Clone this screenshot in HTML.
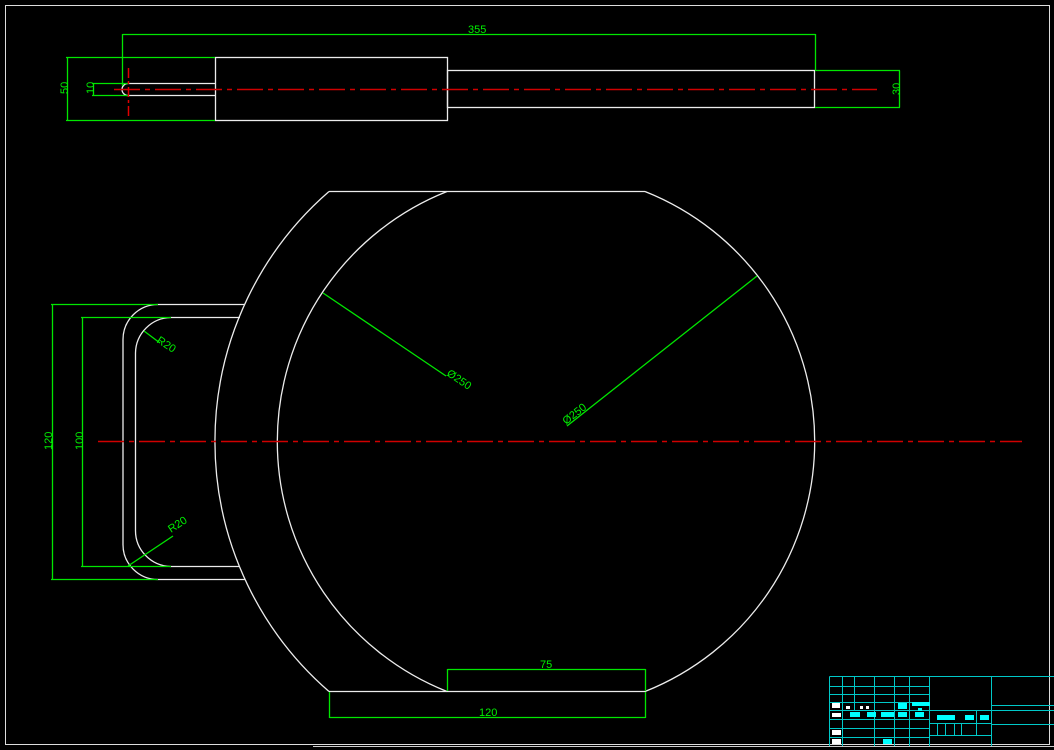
<!DOCTYPE html>
<html><head><meta charset="utf-8"><style>
html,body{margin:0;padding:0;background:#000;width:1054px;height:750px;overflow:hidden}
svg{display:block}
text{font-family:"Liberation Sans",sans-serif;font-size:11px;fill:#00f000}
</style></head><body>
<svg width="1054" height="750" viewBox="0 0 1054 750" xmlns="http://www.w3.org/2000/svg">
<rect x="5.5" y="5.5" width="1044" height="739" fill="none" stroke="#ddd" stroke-width="1"/>
<g fill="none" stroke="#ececec" stroke-width="1.3">
 <rect x="215.5" y="57.5" width="232" height="63"/>
 <rect x="447.5" y="70.5" width="367" height="37"/>
 <path d="M215.5 83.5 H128 A6 6 0 0 0 128 95.5 H215.5"/>
 <path d="M329 191.5 H645 M329 691.5 H645"/>
 <path d="M329 191.5 A331 331 0 0 0 329 691.5"/>
 <path d="M447 191.5 A269 269 0 0 0 447 691.5"/>
 <path d="M645 191.5 A269 269 0 0 1 645 691.5"/>
 <path d="M245 304.5 H158 A35 35 0 0 0 123 339.5 V544 A35 35 0 0 0 158 579.5 H245"/>
 <path d="M240 317.5 H171 A36 36 0 0 0 135.5 353 V530 A36 36 0 0 0 171 566.5 H240"/>
</g>
<g fill="none" stroke="#00e600" stroke-width="1.3">
 <path d="M122.5 34.5 H815.5 M122.5 34 V86 M815.5 34 V70"/>
 <path d="M67.5 57.5 V120.5 M66 57.5 H215 M66 120.5 H215"/>
 <path d="M93.5 83.5 V95.5 M92 83.5 H128 M92 95.5 H128"/>
 <path d="M899.5 70.5 V107.5 M815 70.5 H900 M815 107.5 H900"/>
 <path d="M52.5 304.5 V579.5 M51 304.5 H158 M51 579.5 H158"/>
 <path d="M82.5 317.5 V566.5 M81 317.5 H171 M81 566.5 H171"/>
 <path d="M144 331 L160 343"/>
 <path d="M128 566 L173 536"/>
 <path d="M323 293 L446 376"/>
 <path d="M757 276 L567 426"/>
 <path d="M447.5 669.5 H645.5 M447.5 669 V691 M645.5 669 V691"/>
 <path d="M329.5 717.5 H645.5 M329.5 692 V718 M645.5 692 V718"/>
</g>
<g fill="none" stroke="#d00000" stroke-width="1.6" stroke-dasharray="26 5 5 5">
 <path d="M114 89.5 H877"/>
 <path d="M98 441.5 H1022"/>
</g>
<path d="M128.5 68 V116" stroke="#e00000" stroke-width="1.5" stroke-dasharray="10 3 3 3"/>
<text x="468" y="33">355</text>
<text transform="translate(68,94) rotate(-90)">50</text>
<text transform="translate(94,94) rotate(-90)">10</text>
<text transform="translate(900,95) rotate(-90)">30</text>
<text transform="translate(52,450) rotate(-90)">120</text>
<text transform="translate(83,450) rotate(-90)">100</text>
<text transform="translate(156,342) rotate(33)">R20</text>
<text transform="translate(171,533) rotate(-33)">R20</text>
<text transform="translate(446,375) rotate(34)">Ø250</text>
<text transform="translate(566,425) rotate(-38)">Ø250</text>
<text x="540" y="668">75</text>
<text x="479" y="716">120</text>
<g fill="none" stroke="#00c8c8" stroke-width="1">
 <path d="M829.5 676.5 H1054 M829.5 676.5 V746"/>
 <path d="M829 686.5 H929 M829 694.5 H929 M829 702.5 H929 M829 710.5 H1054 M829 719.5 H929 M829 728.5 H929 M829 737.5 H929"/>
 <path d="M842.5 676 V746 M854.5 676 V710 M874.5 676 V746 M894.5 676 V746 M909.5 676 V746 M929.5 676 V746 M991.5 676 V746"/>
 <path d="M929 723.5 H991 M929 735.5 H991 M937.5 723 V735 M945.5 723 V735 M954.5 723 V735 M961.5 723 V735 M976.5 710 V735"/>
 <path d="M991 705.5 H1054 M991 724.5 H1054"/>
</g>
<g fill="#00ffff">
 <rect x="898" y="703" width="9" height="6"/><rect x="912" y="702" width="18" height="4"/><rect x="918" y="708" width="4" height="3"/>
 <rect x="850" y="712" width="10" height="5"/><rect x="867" y="712" width="9" height="5"/><rect x="881" y="712" width="13" height="5"/><rect x="898" y="712" width="9" height="5"/><rect x="915" y="712" width="9" height="5"/>
 <rect x="937" y="715" width="18" height="5"/><rect x="965" y="715" width="9" height="5"/><rect x="980" y="715" width="9" height="5"/>
 <rect x="883" y="739" width="9" height="5"/>
</g>
<g fill="#fff">
 <rect x="832" y="703" width="8" height="5"/><rect x="832" y="713" width="9" height="4"/><rect x="832" y="730" width="9" height="5"/><rect x="832" y="739" width="9" height="5"/>
 <rect x="846" y="706" width="4" height="3"/><rect x="860" y="706" width="3" height="3"/><rect x="866" y="706" width="3" height="3"/>
</g>
<path d="M313 746.5 H1054" stroke="#ccc" stroke-width="1"/>
</svg>
</body></html>
